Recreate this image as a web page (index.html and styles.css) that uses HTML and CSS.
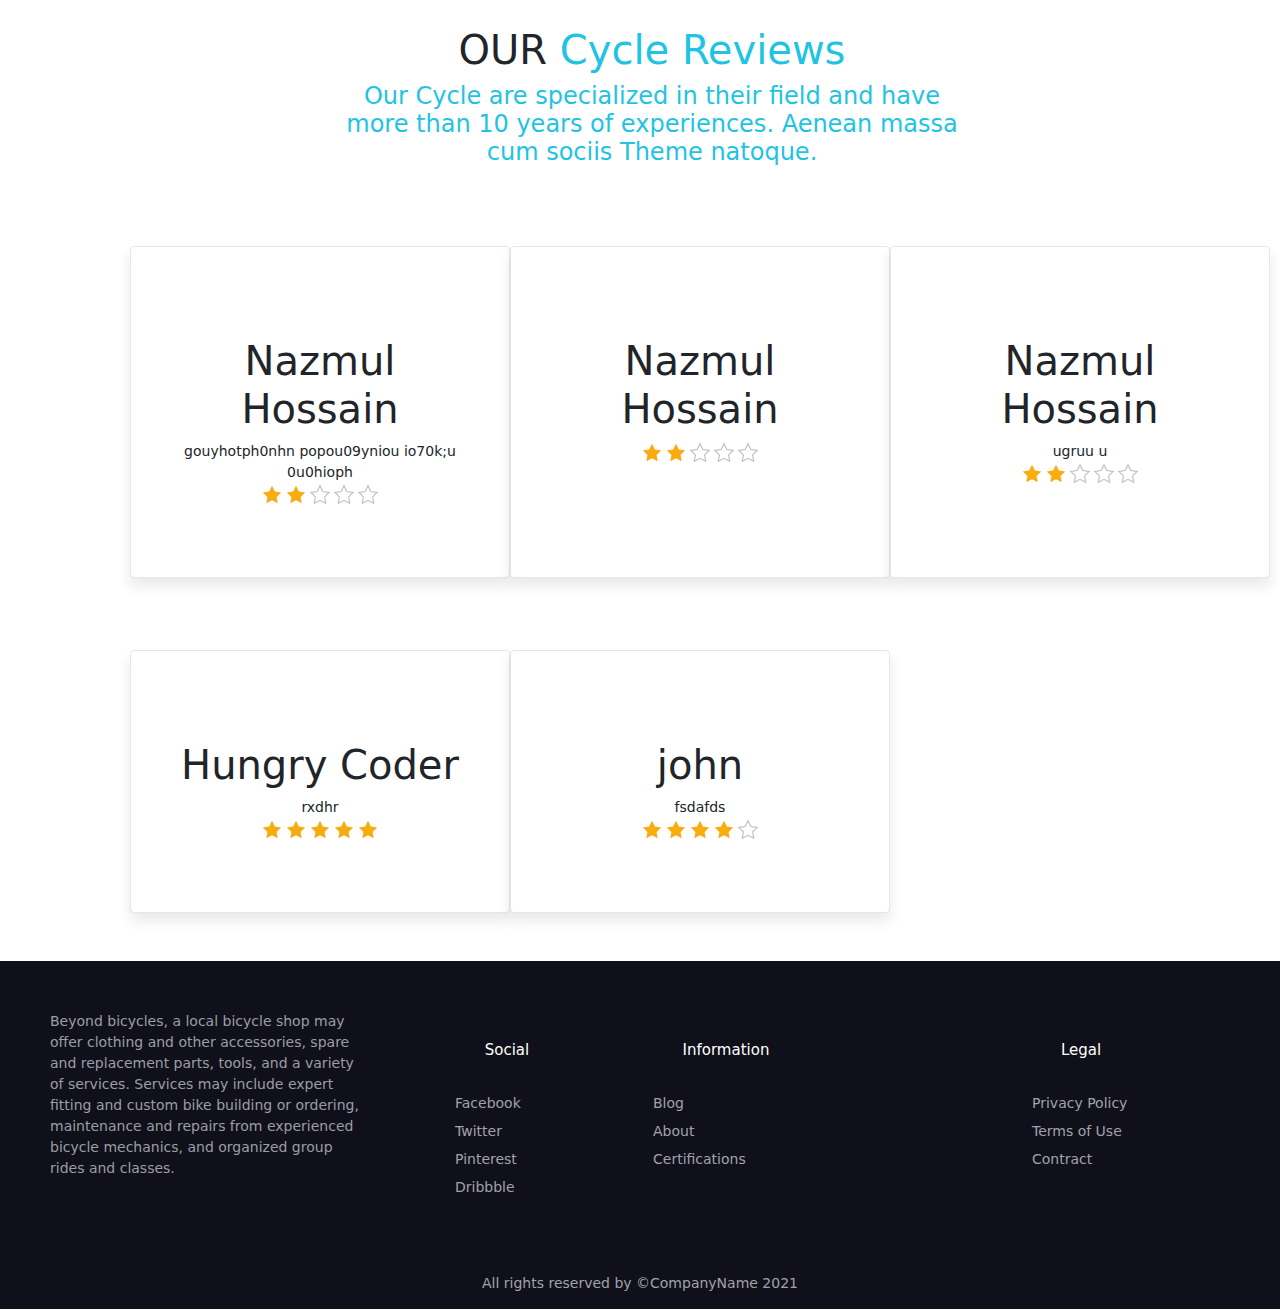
FILE: index.html
```html
<!DOCTYPE html>
<html lang="en">
<head>
<meta charset="utf-8">
<title>Cycle Reviews</title>
<link rel="stylesheet" href="styles.css">
</head>
<body>
<section class="reviews">
  <header class="reviews-head">
    <h1 class="reviews-title">OUR <span class="accent">Cycle Reviews</span></h1>
    <h3 class="reviews-sub">Our Cycle are specialized in their field and have more than 10 years of experiences. Aenean massa cum sociis Theme natoque.</h3>
  </header>

  <div class="cards">
    <div class="card">
      <h2 class="card-name">Nazmul Hossain</h2>
      <p class="card-desc">gouyhotph0nhn popou09yniou io70k;u 0u0hioph</p>
      <div class="stars">
        <svg class="star on" viewBox="0 0 24 24"><path d="M12 2l3.09 6.26L22 9.27l-5 4.87 1.18 6.88L12 17.770l-6.18 3.25L7 14.14 2 9.27l6.91-1.01L12 2z"/></svg>
        <svg class="star on" viewBox="0 0 24 24"><path d="M12 2l3.09 6.26L22 9.27l-5 4.87 1.18 6.88L12 17.77l-6.18 3.25L7 14.14 2 9.27l6.91-1.01L12 2z"/></svg>
        <svg class="star off" viewBox="0 0 24 24"><path d="M12 2l3.09 6.26L22 9.27l-5 4.87 1.18 6.88L12 17.77l-6.18 3.25L7 14.14 2 9.27l6.91-1.01L12 2z"/></svg>
        <svg class="star off" viewBox="0 0 24 24"><path d="M12 2l3.09 6.26L22 9.27l-5 4.87 1.18 6.88L12 17.77l-6.18 3.25L7 14.14 2 9.27l6.91-1.01L12 2z"/></svg>
        <svg class="star off" viewBox="0 0 24 24"><path d="M12 2l3.09 6.26L22 9.27l-5 4.87 1.18 6.88L12 17.77l-6.18 3.25L7 14.14 2 9.27l6.91-1.01L12 2z"/></svg>
      </div>
    </div>
    <div class="card">
      <h2 class="card-name">Nazmul Hossain</h2>
      <p class="card-desc"></p>
      <div class="stars">
        <svg class="star on" viewBox="0 0 24 24"><path d="M12 2l3.09 6.26L22 9.27l-5 4.87 1.18 6.88L12 17.77l-6.18 3.25L7 14.14 2 9.27l6.91-1.01L12 2z"/></svg>
        <svg class="star on" viewBox="0 0 24 24"><path d="M12 2l3.09 6.26L22 9.27l-5 4.87 1.18 6.88L12 17.77l-6.18 3.25L7 14.14 2 9.27l6.91-1.01L12 2z"/></svg>
        <svg class="star off" viewBox="0 0 24 24"><path d="M12 2l3.09 6.26L22 9.27l-5 4.87 1.18 6.88L12 17.77l-6.18 3.25L7 14.14 2 9.27l6.91-1.01L12 2z"/></svg>
        <svg class="star off" viewBox="0 0 24 24"><path d="M12 2l3.09 6.26L22 9.27l-5 4.87 1.18 6.88L12 17.77l-6.18 3.25L7 14.14 2 9.27l6.91-1.01L12 2z"/></svg>
        <svg class="star off" viewBox="0 0 24 24"><path d="M12 2l3.09 6.26L22 9.27l-5 4.87 1.18 6.88L12 17.77l-6.18 3.25L7 14.14 2 9.27l6.91-1.01L12 2z"/></svg>
      </div>
    </div>
    <div class="card">
      <h2 class="card-name">Nazmul Hossain</h2>
      <p class="card-desc">ugruu u</p>
      <div class="stars">
        <svg class="star on" viewBox="0 0 24 24"><path d="M12 2l3.09 6.26L22 9.27l-5 4.87 1.18 6.88L12 17.77l-6.18 3.25L7 14.14 2 9.27l6.91-1.01L12 2z"/></svg>
        <svg class="star on" viewBox="0 0 24 24"><path d="M12 2l3.09 6.26L22 9.27l-5 4.87 1.18 6.88L12 17.77l-6.18 3.25L7 14.14 2 9.27l6.91-1.01L12 2z"/></svg>
        <svg class="star off" viewBox="0 0 24 24"><path d="M12 2l3.09 6.26L22 9.27l-5 4.87 1.18 6.88L12 17.77l-6.18 3.25L7 14.14 2 9.27l6.91-1.01L12 2z"/></svg>
        <svg class="star off" viewBox="0 0 24 24"><path d="M12 2l3.09 6.26L22 9.27l-5 4.87 1.18 6.88L12 17.77l-6.18 3.25L7 14.14 2 9.27l6.91-1.01L12 2z"/></svg>
        <svg class="star off" viewBox="0 0 24 24"><path d="M12 2l3.09 6.26L22 9.27l-5 4.87 1.18 6.88L12 17.77l-6.18 3.25L7 14.14 2 9.27l6.91-1.01L12 2z"/></svg>
      </div>
    </div>
    <div class="card">
      <h2 class="card-name">Hungry Coder</h2>
      <p class="card-desc">rxdhr</p>
      <div class="stars">
        <svg class="star on" viewBox="0 0 24 24"><path d="M12 2l3.09 6.26L22 9.27l-5 4.87 1.18 6.88L12 17.77l-6.18 3.25L7 14.14 2 9.27l6.91-1.01L12 2z"/></svg>
        <svg class="star on" viewBox="0 0 24 24"><path d="M12 2l3.09 6.26L22 9.27l-5 4.87 1.18 6.88L12 17.77l-6.18 3.25L7 14.14 2 9.27l6.91-1.01L12 2z"/></svg>
        <svg class="star on" viewBox="0 0 24 24"><path d="M12 2l3.09 6.26L22 9.27l-5 4.87 1.18 6.88L12 17.77l-6.18 3.25L7 14.14 2 9.27l6.91-1.01L12 2z"/></svg>
        <svg class="star on" viewBox="0 0 24 24"><path d="M12 2l3.09 6.26L22 9.27l-5 4.87 1.18 6.88L12 17.77l-6.18 3.25L7 14.14 2 9.27l6.91-1.01L12 2z"/></svg>
        <svg class="star on" viewBox="0 0 24 24"><path d="M12 2l3.09 6.26L22 9.27l-5 4.87 1.18 6.88L12 17.77l-6.18 3.25L7 14.14 2 9.27l6.91-1.01L12 2z"/></svg>
      </div>
    </div>
    <div class="card">
      <h2 class="card-name">john</h2>
      <p class="card-desc">fsdafds</p>
      <div class="stars">
        <svg class="star on" viewBox="0 0 24 24"><path d="M12 2l3.09 6.26L22 9.27l-5 4.87 1.18 6.88L12 17.77l-6.18 3.25L7 14.14 2 9.27l6.91-1.01L12 2z"/></svg>
        <svg class="star on" viewBox="0 0 24 24"><path d="M12 2l3.09 6.26L22 9.27l-5 4.87 1.18 6.88L12 17.77l-6.18 3.25L7 14.14 2 9.27l6.91-1.01L12 2z"/></svg>
        <svg class="star on" viewBox="0 0 24 24"><path d="M12 2l3.09 6.26L22 9.27l-5 4.87 1.18 6.88L12 17.77l-6.18 3.25L7 14.14 2 9.27l6.91-1.01L12 2z"/></svg>
        <svg class="star on" viewBox="0 0 24 24"><path d="M12 2l3.09 6.26L22 9.27l-5 4.87 1.18 6.88L12 17.77l-6.18 3.25L7 14.14 2 9.27l6.91-1.01L12 2z"/></svg>
        <svg class="star off" viewBox="0 0 24 24"><path d="M12 2l3.09 6.26L22 9.27l-5 4.87 1.18 6.88L12 17.77l-6.18 3.25L7 14.14 2 9.27l6.91-1.01L12 2z"/></svg>
      </div>
    </div>
  </div>
</section>

<footer class="footer">
  <div class="footer-top">
    <p class="footer-about">Beyond bicycles, a local bicycle shop may offer clothing and other accessories, spare and replacement parts, tools, and a variety of services. Services may include expert fitting and custom bike building or ordering, maintenance and repairs from experienced bicycle mechanics, and organized group rides and classes.</p>
    <div class="f-col f-col--social">
      <h5 class="f-head">Social</h5>
      <ul class="f-list">
        <li>Facebook</li>
        <li>Twitter</li>
        <li>Pinterest</li>
        <li>Dribbble</li>
      </ul>
    </div>
    <div class="f-col f-col--info">
      <h5 class="f-head">Information</h5>
      <ul class="f-list">
        <li>Blog</li>
        <li>About</li>
        <li>Certifications</li>
      </ul>
    </div>
    <div class="f-col f-col--legal">
      <h5 class="f-head">Legal</h5>
      <ul class="f-list">
        <li>Privacy Policy</li>
        <li>Terms of Use</li>
        <li>Contract</li>
      </ul>
    </div>
  </div>
  <p class="copyright">All rights reserved by ©CompanyName 2021</p>
</footer>
</body>
</html>
```

FILE: styles.css
```css
* { box-sizing: border-box; }

html, body {
  margin: 0;
  padding: 0;
  background: #ffffff;
}

body {
  font-family: "DejaVu Sans", "Noto Sans", sans-serif;
  color: #212529;
}

.reviews {
  padding: 26px 0 48px;
}

.reviews-head {
  padding-left: 24px;
  text-align: center;
}

.reviews-title {
  margin: 0 0 8px;
  font-size: 40px;
  line-height: 1.2;
  font-weight: 400;
  color: #212529;
}

.accent {
  color: #1fc3e3;
}

.reviews-sub {
  margin: 0 auto;
  max-width: 640px;
  font-size: 24px;
  line-height: 28px;
  font-weight: 400;
  color: #1fc3e3;
}

.cards {
  margin: 80px 0 0 130px;
  display: grid;
  grid-template-columns: repeat(3, 380px);
  row-gap: 72px;
}

.card {
  background: #fff;
  border: 1px solid #e6e6e6;
  border-radius: 4px;
  padding: 90px 40px 70px;
  text-align: center;
  box-shadow: 0 8px 14px rgba(0, 0, 0, 0.09);
}

.card-name {
  margin: 0 0 8px;
  font-size: 40px;
  line-height: 48px;
  font-weight: 400;
  color: #212529;
}

.card-desc {
  margin: 0;
  font-size: 14px;
  line-height: 21px;
  color: #212529;
}

.stars {
  height: 24px;
  display: flex;
  justify-content: center;
  align-items: center;
  gap: 2px;
}

.star {
  width: 22px;
  height: 22px;
}

.star.on path {
  fill: #f8ac0d;
}

.star.off path {
  fill: #fff;
  stroke: #bdbdbd;
  stroke-width: 1.2;
}

.footer {
  background: #10101a;
  padding: 50px 0 15px;
}

.footer-top {
  display: grid;
  grid-template-columns: 373px 198px 379px auto;
  padding-left: 50px;
}

.footer-about {
  margin: 0;
  width: 320px;
  font-size: 14px;
  line-height: 21px;
  color: #9d9da5;
}

.f-col {
  padding-top: 28px;
}

.f-col--social { width: 168px; }
.f-col--info { width: 210px; }
.f-col--legal { width: 162px; }

.f-head {
  margin: 0 0 28px;
  font-size: 15px;
  line-height: 22px;
  font-weight: 400;
  color: #ffffff;
  text-align: center;
}

.f-list {
  list-style: none;
  margin: 0;
  padding-left: 32px;
}

.f-list li {
  font-size: 14px;
  line-height: 28px;
  color: #a2a2aa;
}

.copyright {
  margin: 72px 0 0;
  text-align: center;
  font-size: 14px;
  line-height: 21px;
  color: #a2a2aa;
}
```
